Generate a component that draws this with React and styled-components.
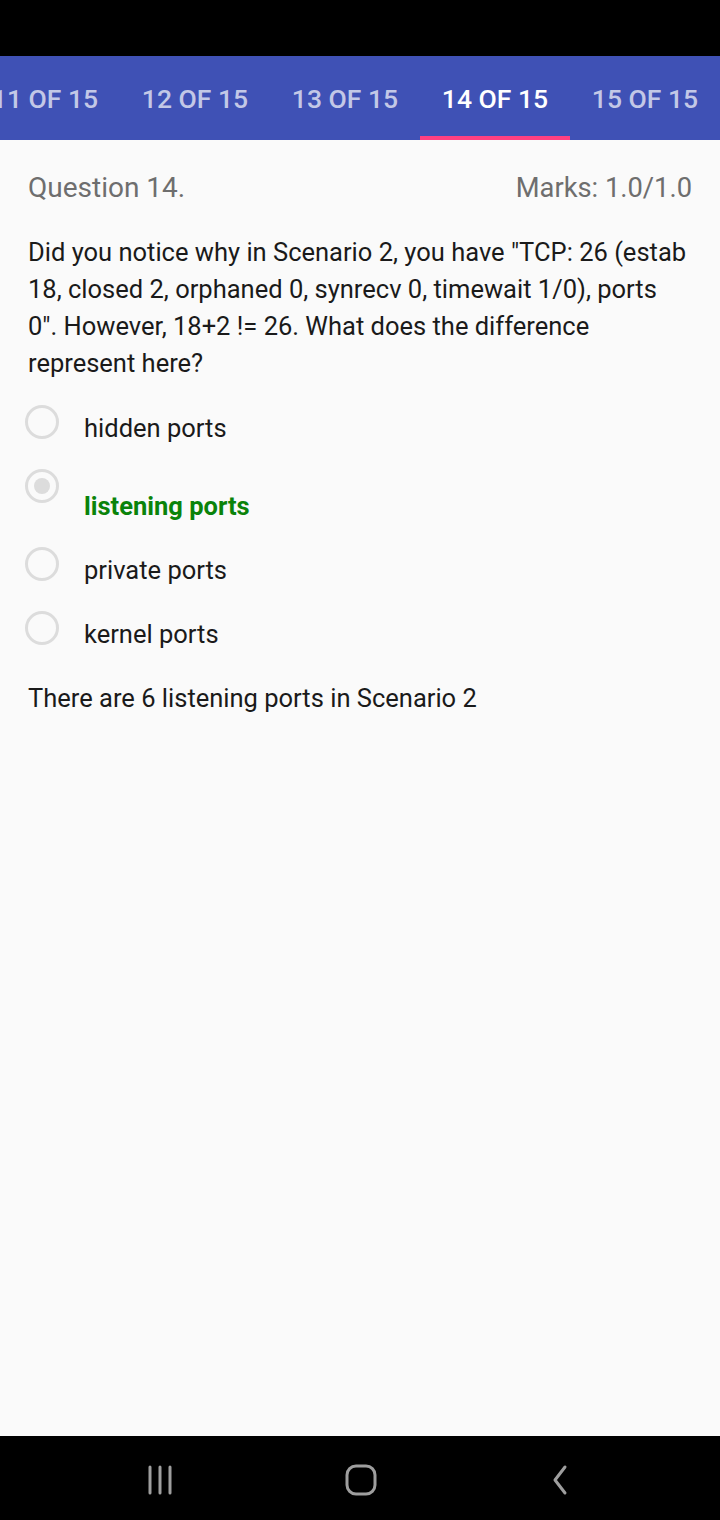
import React from "react";
import styled, { createGlobalStyle } from "styled-components";

const Global = createGlobalStyle`
  html, body { margin: 0; padding: 0; background: #fafafa; }
  body { font-family: Roboto, "Noto Sans", sans-serif; }
  #root { width: 720px; height: 1520px; }
`;

const Screen = styled.div`
  width: 720px;
  height: 1520px;
  display: flex;
  flex-direction: column;
  background: #fafafa;
  overflow: hidden;
`;

const StatusBar = styled.div`
  height: 56px;
  background: #000;
  flex: none;
`;

const TabBar = styled.div`
  height: 84px;
  background: #3f51b5;
  display: flex;
  flex: none;
  overflow: hidden;
`;

const TabStrip = styled.div`
  display: flex;
  margin-left: -30px;
`;

const Tab = styled.div`
  position: relative;
  width: 150px;
  flex: none;
  display: flex;
  align-items: center;
  justify-content: center;
  font-size: 26.5px;
  font-weight: 500;
  white-space: nowrap;
  color: ${(p) => (p.$active ? "#ffffff" : "rgba(255,255,255,0.7)")};
  &::after {
    content: "";
    display: ${(p) => (p.$active ? "block" : "none")};
    position: absolute;
    left: 0;
    right: 0;
    bottom: 0;
    height: 4px;
    background: #ff4081;
  }
`;

const Content = styled.div`
  flex: 1;
  padding: 33px 28px 0 28px;
  display: flex;
  flex-direction: column;
`;

const Header = styled.div`
  display: flex;
  justify-content: space-between;
  align-items: center;
  line-height: 30px;
  color: #6e6e6e;
`;

const HeaderText = styled.span`
  font-size: ${(p) => (p.$large ? "28px" : "27.3px")};
`;

const QuestionText = styled.p`
  margin: 31px 0 0 0;
  font-size: 25.5px;
  line-height: 37px;
  color: #1a1a1a;
`;

const Options = styled.div`
  margin-top: 23px;
  display: flex;
  flex-direction: column;
`;

const OptionRow = styled.div`
  display: flex;
  align-items: flex-start;
  padding-bottom: 23px;
  margin-left: -3px;
`;

const Radio = styled.div`
  width: 34px;
  height: 34px;
  box-sizing: border-box;
  border: 3px solid #dcdcdc;
  border-radius: 50%;
  flex: none;
  display: flex;
  align-items: center;
  justify-content: center;
  &::after {
    content: "";
    display: ${(p) => (p.$checked ? "block" : "none")};
    width: 16px;
    height: 16px;
    border-radius: 50%;
    background: #dcdcdc;
  }
`;

const OptionLabel = styled.span`
  margin-left: 25px;
  margin-top: ${(p) => (p.$correct ? "19px" : "5px")};
  font-size: 25.5px;
  line-height: 36px;
  font-weight: ${(p) => (p.$correct ? 700 : 400)};
  color: ${(p) => (p.$correct ? "#0a830a" : "#1a1a1a")};
`;

const Feedback = styled.p`
  margin: 5px 0 0 0;
  font-size: 25.5px;
  line-height: 36px;
  color: #1a1a1a;
`;

const NavBar = styled.div`
  height: 84px;
  background: #000;
  flex: none;
  display: grid;
  grid-template-columns: 1fr 1fr 1fr;
  align-items: center;
  justify-items: center;
`;

const NavIcon = styled.svg`
  display: block;
  margin-top: 4px;
`;

const tabs = ["11 OF 15", "12 OF 15", "13 OF 15", "14 OF 15", "15 OF 15"];
const options = [
  { text: "hidden ports" },
  { text: "listening ports", checked: true, correct: true },
  { text: "private ports" },
  { text: "kernel ports" },
];

export default function App() {
  return (
    <>
      <Global />
      <Screen>
        <StatusBar />
        <TabBar>
          <TabStrip>
            {tabs.map((t) => (
              <Tab key={t} $active={t === "14 OF 15"}>
                {t}
              </Tab>
            ))}
          </TabStrip>
        </TabBar>
        <Content>
          <Header>
            <HeaderText $large>Question 14.</HeaderText>
            <HeaderText>Marks: 1.0/1.0</HeaderText>
          </Header>
          <QuestionText>
            Did you notice why in Scenario 2, you have "TCP: 26 (estab 18, closed 2, orphaned 0,
            synrecv 0, timewait 1/0), ports 0". However, 18+2 != 26. What does the difference
            represent here?
          </QuestionText>
          <Options>
            {options.map((o) => (
              <OptionRow key={o.text}>
                <Radio $checked={o.checked} />
                <OptionLabel $correct={o.correct}>{o.text}</OptionLabel>
              </OptionRow>
            ))}
          </Options>
          <Feedback>There are 6 listening ports in Scenario 2</Feedback>
        </Content>
        <NavBar>
          <NavIcon width="30" height="32" viewBox="0 0 30 32" style={{ marginLeft: 79 }}>
            <g stroke="#9e9e9e" strokeWidth="3" strokeLinecap="round">
              <line x1="5" y1="3" x2="5" y2="29" />
              <line x1="15" y1="3" x2="15" y2="29" />
              <line x1="25" y1="3" x2="25" y2="29" />
            </g>
          </NavIcon>
          <NavIcon width="34" height="34" viewBox="0 0 34 34" style={{ marginLeft: 2 }}>
            <rect x="3" y="3" width="28" height="28" rx="9" fill="none" stroke="#9e9e9e" strokeWidth="3" />
          </NavIcon>
          <NavIcon width="20" height="34" viewBox="0 0 20 34" style={{ marginRight: 78 }}>
            <polyline points="14,4 4,17 14,30" fill="none" stroke="#9e9e9e" strokeWidth="3" strokeLinecap="round" strokeLinejoin="round" />
          </NavIcon>
        </NavBar>
      </Screen>
    </>
  );
}
